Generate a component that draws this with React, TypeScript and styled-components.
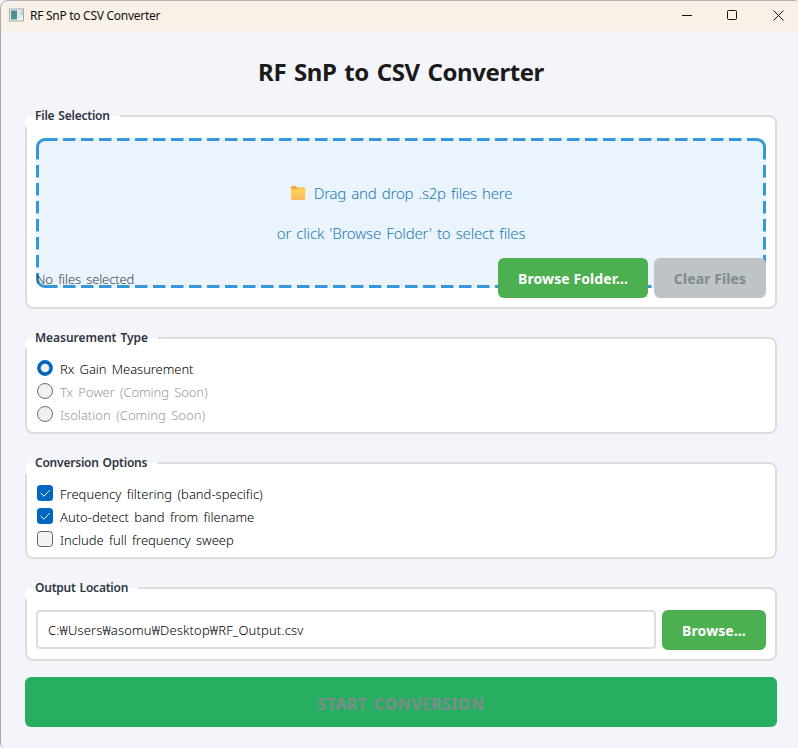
import React, { useState } from 'react';
import styled, { createGlobalStyle } from 'styled-components';

const GlobalStyle = createGlobalStyle`
  * { box-sizing: border-box; }
  html, body { margin: 0; padding: 0; background: #f4f5fa; }
  body, button, input {
    font-family: "Noto Sans", "Noto Sans CJK KR", sans-serif;
    font-size: 13px;
  }
`;

const Window = styled.div`
  width: 798px;
  height: 748px;
  overflow: hidden;
  display: flex;
  flex-direction: column;
  border-top: 1px solid #b3b0b3;
  border-left: 1px solid #ababad;
  border-top-left-radius: 8px;
  border-bottom-left-radius: 5px;
  border-top-right-radius: 4px;
  background: #f4f5fa;
`;

const TitleBar = styled.header`
  flex: none;
  height: 30px;
  display: flex;
  align-items: center;
  padding: 0 0 2px 8px;
  background: #f9f1e8;
`;

const AppName = styled.span`
  margin-left: 5px;
  font-size: 12px;
  letter-spacing: -0.28px;
  color: #111;
  flex: 1;
`;

const WindowButton = styled.button<{ $width?: number; $inset?: number }>`
  width: ${(p) => p.$width ?? 45}px;
  height: 28px;
  padding: 0 0 0 ${(p) => p.$inset ?? 0}px;
  border: 0;
  background: transparent;
  display: flex;
  align-items: center;
  justify-content: center;
`;

const Content = styled.main`
  display: flex;
  flex-direction: column;
  padding: 23px 21px 0 24px;
`;

const Heading = styled.h1`
  margin: 0 0 26px;
  height: 35px;
  line-height: 35px;
  text-align: center;
  font-size: 24px;
  font-weight: 700;
  letter-spacing: -0.42px;
  word-spacing: 2px;
  color: #1a1a1a;
`;

const Group = styled.section<{ $height: number }>`
  position: relative;
  height: ${(p) => p.$height}px;
  margin-bottom: 28px;
  padding: 21px 9px 0;
  border: 2px solid #dcdde1;
  border-radius: 8px;
  background: #fff;

  &:last-of-type { margin-bottom: 16px; }
`;

const Legend = styled.h2<{ $spacing?: number }>`
  position: absolute;
  left: -2px;
  top: -2px;
  height: 12px;
  margin: 0;
  padding: 0 10px 0 10px;
  background: radial-gradient(circle at 7px 7px, #fff 6px, #f4f5fa 6.6px) 0 0 / 7px 7px no-repeat,
    linear-gradient(#fff, #fff) 7px 1px no-repeat,
    linear-gradient(#fff, #fff) 1px 7px no-repeat,
    #f4f5fa;
  font-size: 12px;
  line-height: 2px;
  font-weight: 600;
  letter-spacing: ${(p) => p.$spacing ?? -0.22}px;
  word-spacing: 1px;
  white-space: nowrap;
  color: #2f3542;
`;

const DropZone = styled.div`
  position: relative;
  height: 150px;
  padding-top: 43px;
  border-radius: 9px;
  background: #ebf4fc;
  color: #2079b5;
  font-size: 15px;
  font-weight: 360;
  word-spacing: 1.5px;
`;

const DashedFrame = styled.svg`
  position: absolute;
  inset: 0;
`;

const DropLine = styled.p<{ $spacing: number }>`
  display: flex;
  align-items: center;
  justify-content: center;
  gap: 8px;
  height: 24px;
  margin: 0 0 16px;
  letter-spacing: ${(p) => p.$spacing}px;
`;

const FileActions = styled.div`
  position: relative;
  display: flex;
  align-items: center;
  gap: 6px;
  margin-top: -30px;
`;

const FileStatus = styled.span`
  flex: 1;
  padding-top: 2px;
  font-weight: 350;
  letter-spacing: -0.12px;
  word-spacing: 2px;
  color: #343e4e;
`;

const Button = styled.button<{ $width: number }>`
  flex: none;
  width: ${(p) => p.$width}px;
  height: 40px;
  padding: 0;
  border: 0;
  border-radius: 6px;
  background: #4caf50;
  color: #fff;
  font-size: 14px;
  font-weight: 700;
  letter-spacing: 0.1px;

  &:disabled {
    background: #bdc3c7;
    color: #7f8c8d;
  }
`;

const OptionRow = styled.label<{ $muted?: boolean }>`
  display: flex;
  align-items: flex-start;
  gap: 7px;
  height: 23px;
  color: ${(p) => (p.$muted ? '#999' : '#000')};
`;

const OptionText = styled.span<{ $spacing: number }>`
  line-height: 18px;
  font-weight: 350;
  letter-spacing: ${(p) => p.$spacing}px;
  word-spacing: 2px;
`;

const Options = styled.div`
  padding-left: 1px;
`;

const PathRow = styled.div`
  display: flex;
  gap: 6px;
`;

const PathInput = styled.input`
  flex: 1;
  min-width: 0;
  height: 39px;
  padding: 0 10px;
  border: 2px solid #dcdde1;
  border-radius: 4px;
  outline: 0;
  background: #fff;
  color: #000;
  font-weight: 350;
  letter-spacing: 0.14px;
`;

const StartButton = styled.button`
  height: 50px;
  padding: 3px 0 0;
  border: 0;
  border-radius: 6px;
  background: #27ae60;
  color: #7f8c8d;
  font-size: 16px;
  font-weight: 700;
  letter-spacing: 0.42px;
  word-spacing: 2px;
`;

const AppIcon = () => (
  <svg width="16" height="16" viewBox="0 0 16 16">
    <defs>
      <linearGradient id="screen" x1="0" y1="0" x2="1" y2="1">
        <stop offset="0" stopColor="#4c7fa6" />
        <stop offset="1" stopColor="#4fa07a" />
      </linearGradient>
    </defs>
    <rect x="0.5" y="2" width="14" height="12" fill="#f4f6f6" stroke="#a3a9ad" />
    <rect x="2" y="3.5" width="6" height="9" fill="url(#screen)" />
    <rect x="8.6" y="3.5" width="2.4" height="9" fill="#dde3e6" />
    <rect x="11.5" y="3.5" width="2.3" height="5" fill="#b7d4c1" />
    <rect x="11.5" y="8.5" width="2.3" height="4" fill="#e4e9ea" />
  </svg>
);

const FolderIcon = () => (
  <svg width="16" height="16" viewBox="0 0 16 16">
    <defs>
      <linearGradient id="folder" x1="0" y1="0" x2="0" y2="1">
        <stop offset="0" stopColor="#ffd657" />
        <stop offset="1" stopColor="#ffb75f" />
      </linearGradient>
    </defs>
    <path d="M1 2Q1 1 2 1H5.6L7.6 2.6H14.2Q15.2 2.6 15.2 3.6V6H1Z" fill="#f3ab3c" />
    <path d="M1 4.6H6L7.8 3.6H15.2V14Q15.2 15 14.2 15H2Q1 15 1 14Z" fill="url(#folder)" />
  </svg>
);

const Radio = ({ checked }: { checked?: boolean }) => (
  <svg width="16" height="16" viewBox="0 0 16 16">
    {checked ? (
      <circle cx="8" cy="8" r="6.1" fill="#f3f3f3" stroke="#0067c0" strokeWidth="3.6" />
    ) : (
      <circle cx="8" cy="8" r="7.5" fill="#f0f0f0" stroke="#6e6e6e" />
    )}
  </svg>
);

const Check = ({ checked }: { checked?: boolean }) => (
  <svg width="16" height="16" viewBox="0 0 16 16">
    {checked ? (
      <>
        <rect width="16" height="16" rx="3.5" fill="#0067c0" />
        <path d="M3.6 8L6.8 11.2L13 5" fill="none" stroke="#fff" strokeWidth="1" />
      </>
    ) : (
      <rect x="0.5" y="0.5" width="15" height="15" rx="3.2" fill="#f3f3f3" stroke="#626262" />
    )}
  </svg>
);

const measurements = [
  { label: 'Rx Gain Measurement', spacing: -0.06, enabled: true },
  { label: 'Tx Power (Coming Soon)', spacing: -0.1, enabled: false },
  { label: 'Isolation (Coming Soon)', spacing: 0.01, enabled: false },
];

const conversions = [
  { label: 'Frequency filtering (band-specific)', spacing: 0, on: true },
  { label: 'Auto-detect band from filename', spacing: -0.01, on: true },
  { label: 'Include full frequency sweep', spacing: -0.02, on: false },
];

export default function App() {
  const [path, setPath] = useState('C:₩Users₩asomu₩Desktop₩RF_Output.csv');
  const [options, setOptions] = useState(conversions);
  const toggle = (index: number) =>
    setOptions(options.map((o, i) => (i === index ? { ...o, on: !o.on } : o)));

  return (
    <>
      <GlobalStyle />
      <Window>
        <TitleBar>
          <AppIcon />
          <AppName>RF SnP to CSV Converter</AppName>
          <WindowButton aria-label="Minimize">
            <svg width="10" height="10"><path d="M0 5.5H10" stroke="#111" /></svg>
          </WindowButton>
          <WindowButton aria-label="Maximize" $width={46}>
            <svg width="10" height="10">
              <rect x="0.5" y="0.5" width="9" height="9" rx="1" fill="none" stroke="#111" />
            </svg>
          </WindowButton>
          <WindowButton aria-label="Close" $width={43} $inset={3}>
            <svg width="11" height="11">
              <path d="M0.5 0.5L10.5 10.5M10.5 0.5L0.5 10.5" stroke="#111" />
            </svg>
          </WindowButton>
        </TitleBar>
        <Content>
          <Heading>RF SnP to CSV Converter</Heading>

          <Group $height={194}>
            <Legend>File Selection</Legend>
            <DropZone>
              <DashedFrame width="730" height="150" fill="none" stroke="#3498db" strokeWidth="3">
                <path d="M9 1.5H721M9 148.5H721M1.5 9V141M728.5 9V141" strokeDasharray="12.5 5.5" />
                <path d="M1.5 9A7.5 7.5 0 0 1 9 1.5M721 1.5A7.5 7.5 0 0 1 728.5 9M728.5 141A7.5 7.5 0 0 1 721 148.5M9 148.5A7.5 7.5 0 0 1 1.5 141" />
              </DashedFrame>
              <DropLine $spacing={-0.22}>
                <FolderIcon />
                Drag and drop .s2p files here
              </DropLine>
              <DropLine $spacing={-0.18}>or click 'Browse Folder' to select files</DropLine>
            </DropZone>
            <FileActions>
              <FileStatus>No files selected</FileStatus>
              <Button $width={150}>Browse Folder...</Button>
              <Button $width={112} disabled>Clear Files</Button>
            </FileActions>
          </Group>

          <Group $height={97}>
            <Legend $spacing={-0.04}>Measurement Type</Legend>
            <Options>
              {measurements.map((m) => (
                <OptionRow key={m.label} $muted={!m.enabled}>
                  <Radio checked={m.enabled} />
                  <OptionText $spacing={m.spacing}>{m.label}</OptionText>
                </OptionRow>
              ))}
            </Options>
          </Group>

          <Group $height={97}>
            <Legend>Conversion Options</Legend>
            <Options>
              {options.map((o, i) => (
                <OptionRow key={o.label} onClick={() => toggle(i)}>
                  <Check checked={o.on} />
                  <OptionText $spacing={o.spacing}>{o.label}</OptionText>
                </OptionRow>
              ))}
            </Options>
          </Group>

          <Group $height={74}>
            <Legend>Output Location</Legend>
            <PathRow>
              <PathInput value={path} onChange={(e) => setPath(e.target.value)} />
              <Button $width={104}>Browse...</Button>
            </PathRow>
          </Group>

          <StartButton disabled>START CONVERSION</StartButton>
        </Content>
      </Window>
    </>
  );
}
